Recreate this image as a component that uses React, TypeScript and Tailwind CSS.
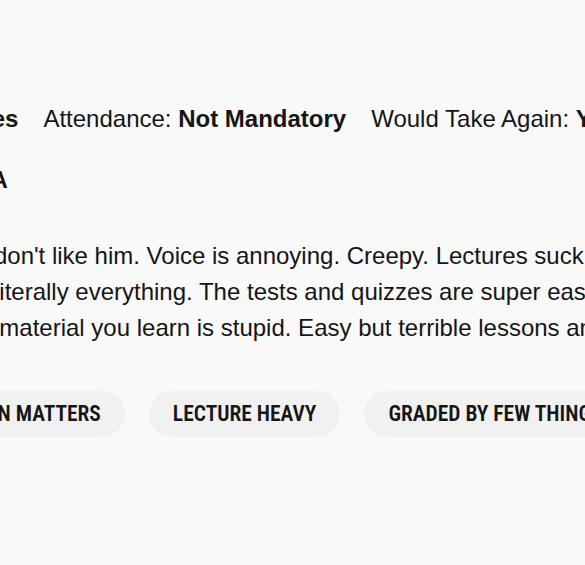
const meta = [
  { label: 'For Credit:', value: 'Yes' },
  { label: 'Attendance:', value: 'Not Mandatory' },
  { label: 'Would Take Again:', value: 'Yes' },
]

const comment = [
  "Personally, I don't like him. Voice is annoying. Creepy. Lectures suck and he",
  'He reads off literally everything. The tests and quizzes are super easy though,',
  'easy, but the material you learn is stupid. Easy but terrible lessons and boring.',
]

const tags = ['PARTICIPATION MATTERS', 'LECTURE HEAVY', 'GRADED BY FEW THINGS']

export default function App() {
  return (
    <div className="w-[585px] h-[565px] overflow-hidden bg-[#f9f9f9] text-[#151515] font-['Liberation_Sans',Arial,sans-serif]">
      <div className="ml-[-143px] pt-[101px] flex flex-col">
        {/* Meta row */}
        <div className="flex gap-[25px] whitespace-nowrap text-[24px] leading-[36px]">
          {meta.map((m) => (
            <div key={m.label}>
              {m.label} <span className="font-bold">{m.value}</span>
            </div>
          ))}
        </div>
        <div className="mt-[25px] whitespace-nowrap text-[24px] leading-[36px]">
          Textbook: <span className="font-bold">N/A</span>
        </div>

        {/* Comment */}
        <div className="mt-[40px] text-[24px] leading-[36px]">
          {comment.map((line) => (
            <div key={line} className="whitespace-nowrap">
              {line}
            </div>
          ))}
        </div>

        {/* Tags */}
        <div className="mt-[45px] -ml-[5px] flex gap-6 whitespace-nowrap">
          {tags.map((t) => (
            <span
              key={t}
              className="h-[46px] px-6 rounded-full bg-[#f1f1f1] flex items-center text-[21.5px] font-semibold font-stretch-condensed font-['Roboto',sans-serif]"
            >
              {t}
            </span>
          ))}
        </div>
      </div>
    </div>
  )
}
